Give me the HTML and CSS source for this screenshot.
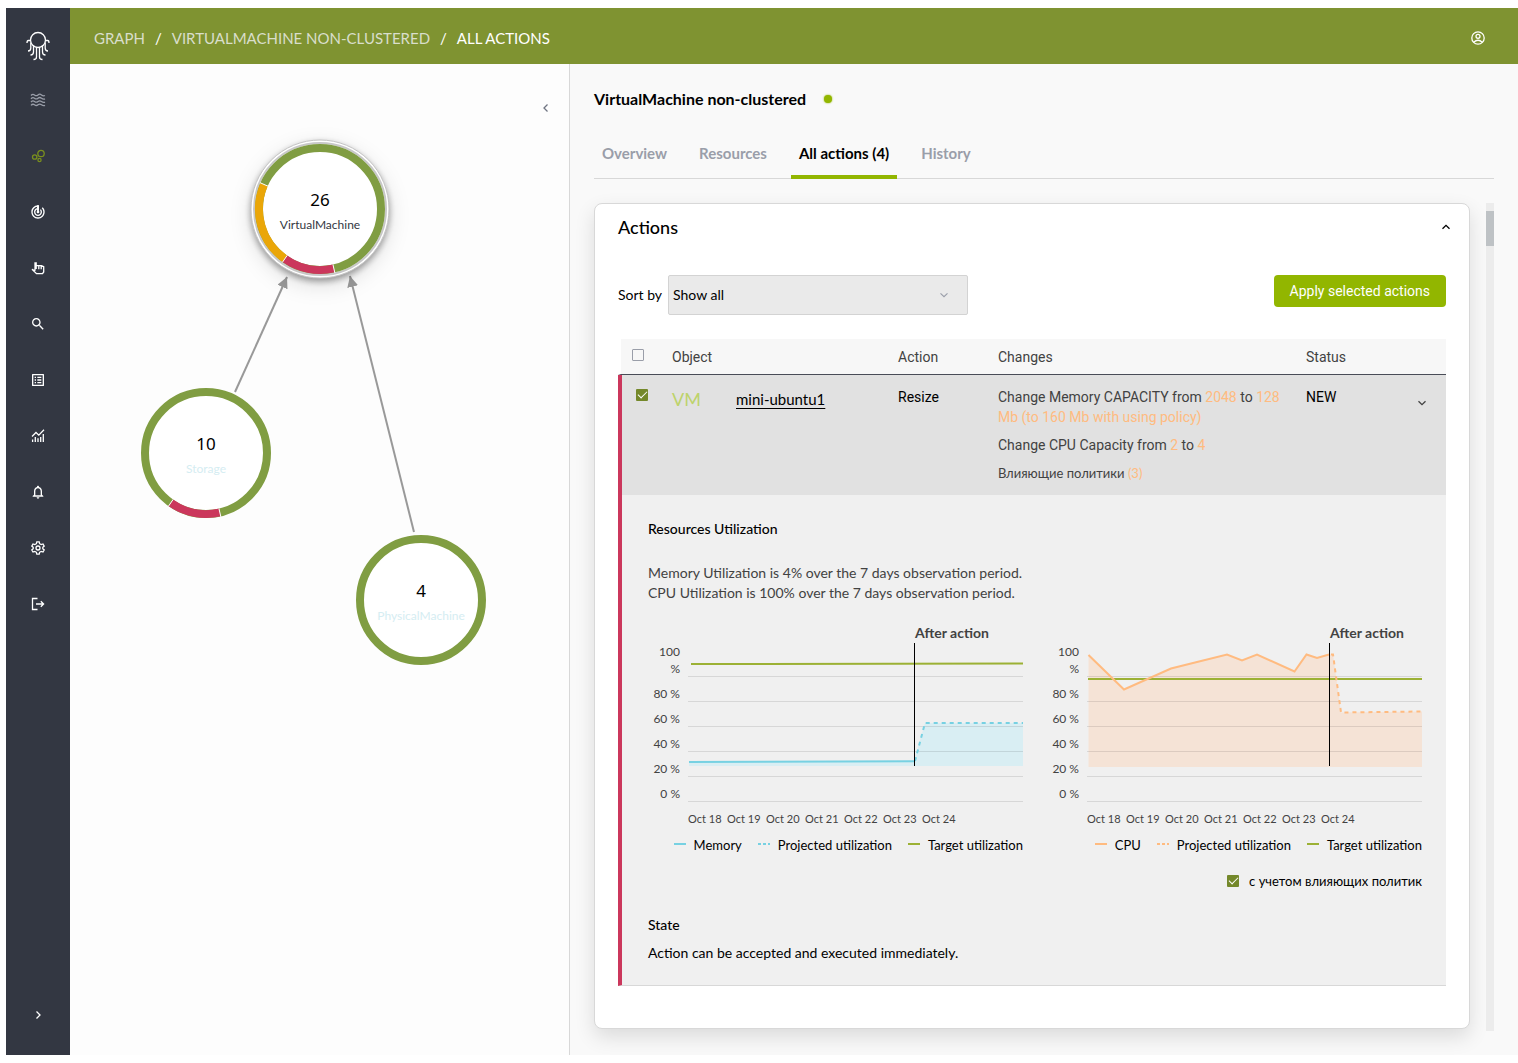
FILE: index.html
```html
<!DOCTYPE html>
<html lang="en">
<head>
    <meta charset="UTF-8">
    <meta name="viewport" content="width=device-width, initial-scale=1.0">
    <title>VirtualMachine non-clustered - All actions</title>
    <link rel="stylesheet" href="styles.css">
</head>
<body>

    <nav class="sidebar" aria-label="Main">
        <a href="#" class="logo" aria-label="Home">
            <svg width="24" height="30" viewBox="0 0 24 30">
                <circle cx="12" cy="9" r="7.5"/>
                <path d="M4.5 9.5H2.3Q1 9.5 1 12M19.500 9.500H21.700Q23 9.500 23 12M4.800 11.500V17Q4.800 20 2 20M19.200 11.500V17Q19.200 20 22 20M7.500 14.500V21Q7.500 24 4.500 24M16.500 14.500V21Q16.500 24 19.500 24M10.500 16V26Q10.500 28.500 7.500 28.500M13.500 16V26Q13.500 28.500 16.500 28.500"/>
            </svg>
        </a>
        <a href="#" class="nav-item muted" aria-label="Flows">
            <svg class="line" viewBox="0 0 16 16"><path d="M1 3.500q1.700-2 3.500-.6t3.500 0t3.500 0t3.500.6M1 6.800q1.700-2 3.500-.6t3.500 0t3.500 0t3.500.6M1 10.100q1.700-2 3.500-.6t3.500 0t3.500 0t3.500.6M1 13.400q1.700-2 3.500-.6t3.500 0t3.500 0t3.500.6"/></svg>
        </a>
        <a href="#" class="nav-item active" aria-label="Graph">
            <svg class="line" viewBox="0 0 16 16"><circle cx="11" cy="5.500" r="3.200"/><circle cx="4.700" cy="9" r="2.200"/><circle cx="9.500" cy="12" r="1.600"/></svg>
        </a>
        <a href="#" class="nav-item" aria-label="Targets">
            <svg viewBox="0 0 24 24"><path d="M19.070 4.930l-1.410 1.410C19.100 7.790 20 9.790 20 12c0 4.420-3.580 8-8 8s-8-3.580-8-8c0-4.080 3.050-7.440 7-7.930v2.020C8.160 6.570 6 9.030 6 12c0 3.310 2.690 6 6 6s6-2.690 6-6c0-1.660-.67-3.160-1.760-4.240l-1.410 1.410C15.550 9.900 16 10.900 16 12c0 2.210-1.790 4-4 4s-4-1.790-4-4c0-1.860 1.280-3.410 3-3.860v2.140c-.6.350-1 .98-1 1.720 0 1.100.9 2 2 2s2-.9 2-2c0-.74-.4-1.380-1-1.720V2h-1C6.480 2 2 6.480 2 12s4.480 10 10 10 10-4.480 10-10c0-2.760-1.120-5.260-2.930-7.070z"/><path d="M10.500 2h3v8h-3z"/></svg>
        </a>
        <a href="#" class="nav-item" aria-label="Actions">
            <svg class="line" viewBox="0 0 16 16"><path d="M5 10.800V2.200M6.200 2.200V9M8.800 5.500V9.300M11.200 6V9.300M6.500 5.700H11.500L13.700 6.600V12L12.500 13.600H6.500L2 9.300L5 10.800"/></svg>
        </a>
        <a href="#" class="nav-item" aria-label="Search">
            <svg viewBox="0 0 24 24"><path d="M15.500 14h-.79l-.28-.27C15.410 12.590 16 11.110 16 9.500 16 5.910 13.090 3 9.500 3S3 5.910 3 9.500 5.910 16 9.500 16c1.610 0 3.090-.59 4.230-1.570l.27.28v.79l5 4.990L20.490 19l-4.990-5zm-6 0C7.010 14 5 11.990 5 9.500S7.010 5 9.500 5 14 7.010 14 9.500 11.990 14 9.500 14z"/></svg>
        </a>
        <a href="#" class="nav-item" aria-label="Policies">
            <svg viewBox="0 0 24 24"><path d="M19 5v14H5V5h14m1.100-2H3.900c-.5 0-.9.4-.9.9v16.200c0 .4.4.9.9.9h16.200c.4 0 .9-.5.9-.9V3.900c0-.5-.5-.9-.9-.9zM11 7h6v2h-6V7zm0 4h6v2h-6v-2zm0 4h6v2h-6zM7 7h2v2H7zm0 4h2v2H7zm0 4h2v2H7z"/></svg>
        </a>
        <a href="#" class="nav-item" aria-label="Reports">
            <svg class="line" viewBox="0 0 16 16"><path d="M2 8.500L6 4.500L8.800 7.200L14 1.800M2.600 14V11.500M5.300 14V9M8 14V10.200M10.700 14V9M13.300 14V6"/></svg>
        </a>
        <a href="#" class="nav-item" aria-label="Notifications">
            <svg viewBox="0 0 24 24"><path d="M12 22c1.100 0 2-.9 2-2h-4c0 1.100.9 2 2 2zm6-6v-5c0-3.070-1.630-5.640-4.500-6.320V4c0-.83-.67-1.500-1.500-1.500s-1.500.67-1.500 1.500v.68C7.640 5.360 6 7.920 6 11v5l-2 2v1h16v-1l-2-2zm-2 1H8v-6c0-2.480 1.510-4.500 4-4.500s4 2.020 4 4.500v6z"/></svg>
        </a>
        <a href="#" class="nav-item" aria-label="Settings">
            <svg class="line" viewBox="0 0 16 16"><circle cx="8" cy="8" r="2"/><path d="M6.800 1.800H9.200L9.600 3.700L11.200 4.600L13 4L14.200 6.100L12.800 7.300V8.700L14.200 9.900L13 12L11.200 11.400L9.600 12.300L9.200 14.200H6.800L6.400 12.300L4.800 11.400L3 12L1.800 9.900L3.200 8.700V7.300L1.800 6.100L3 4L4.800 4.600L6.400 3.700Z"/></svg>
        </a>
        <a href="#" class="nav-item" aria-label="Log out">
            <svg class="line" viewBox="0 0 16 16"><path d="M7.500 2.500H2.500V13.500H7.500M6 8H13.500M10.800 5.200L13.600 8L10.800 10.800"/></svg>
        </a>
        <button class="nav-item expand" aria-label="Expand menu">
            <svg class="line" viewBox="0 0 16 16"><path d="M6.500 4.500L10 8L6.500 11.500"/></svg>
        </button>
    </nav>

    <div class="page">
        <header class="topbar">
            <nav class="breadcrumbs" aria-label="Breadcrumbs">
                <a href="#">GRAPH</a>
                <span>/</span>
                <a href="#">VIRTUALMACHINE NON-CLUSTERED</a>
                <span>/</span>
                <span>ALL ACTIONS</span>
            </nav>
            <button class="icon-button" aria-label="Account">
                <svg class="line" viewBox="0 0 16 16"><circle cx="8" cy="8" r="6.200"/><circle cx="8" cy="6.300" r="2"/><path d="M3.700 12.200Q8 8.300 12.300 12.200"/></svg>
            </button>
        </header>

        <main class="content">
            <section class="graph" aria-label="Graph">
                <button class="icon-button collapse" aria-label="Collapse">
                    <svg class="line" viewBox="0 0 16 16"><path d="M9.500 4.500L6 8L9.500 11.500"/></svg>
                </button>
                <svg class="graph-canvas" viewBox="0 0 499 620">
                    <defs>
                        <marker id="arrow" viewBox="0 0 10 10" refX="10" refY="5" markerWidth="11" markerHeight="11" markerUnits="userSpaceOnUse" orient="auto">
                            <path d="M0 0L10 5L0 10Z" fill="#999"/>
                        </marker>
                    </defs>
                    <path class="edge" d="M165 328L217 213"/>
                    <path class="edge" d="M344 468L280 212"/>

                    <g transform="translate(250 145)">
                        <circle class="halo" r="69"/>
                        <circle class="halo-inner" r="66"/>
                        <circle class="ring" r="61"/>
                        <path class="arc warning" d="M-55.900 -24.500A61 61 0 0 0 -35.200 49.800"/>
                        <path class="arc critical" d="M-35.200 49.800A61 61 0 0 0 13.900 59.400"/>
                        <path class="divider" d="M-52 -22.800L-60 -26.300M-32.800 46.400L-37.600 53.300M12.900 55.400L14.900 64"/>
                        <text class="count" y="-3">26</text>
                        <text class="name" y="20">VirtualMachine</text>
                    </g>
                    <g transform="translate(136 389)">
                        <circle class="ring" r="61"/>
                        <path class="arc critical" d="M-35.200 49.800A61 61 0 0 0 13.900 59.400"/>
                        <path class="divider" d="M-32.800 46.400L-37.600 53.300M12.900 55.400L14.900 64"/>
                        <text class="count" y="-3">10</text>
                        <text class="name faded" y="20">Storage</text>
                    </g>
                    <g transform="translate(351 536)">
                        <circle class="ring" r="61"/>
                        <text class="count" y="-3">4</text>
                        <text class="name faded" y="20">PhysicalMachine</text>
                    </g>
                </svg>
            </section>

            <section class="details">
                <h1>VirtualMachine non-clustered <span class="status-dot"></span></h1>
                <nav class="tabs" aria-label="Sections">
                    <a href="#">Overview</a>
                    <a href="#">Resources</a>
                    <a href="#" class="current">All actions (4)</a>
                    <a href="#">History</a>
                </nav>

                <div class="scroll-area">
                    <div class="card">
                        <div class="card-header">
                            <h2>Actions</h2>
                            <button class="icon-button" aria-label="Collapse actions">
                                <svg class="line" viewBox="0 0 16 16"><path d="M4.500 9.800L8 6.300L11.500 9.800"/></svg>
                            </button>
                        </div>

                        <div class="toolbar">
                            <label for="sort">Sort by</label>
                            <div class="select">
                                <select id="sort">
                                    <option>Show all</option>
                                </select>
                                <svg class="line" viewBox="0 0 16 16"><path d="M4 6.200L8 10L12 6.200"/></svg>
                            </div>
                            <button class="apply">Apply selected actions</button>
                        </div>

                        <table class="actions">
                            <colgroup>
                                <col class="col-check">
                                <col>
                                <col class="col-action">
                                <col class="col-changes">
                                <col class="col-status">
                            </colgroup>
                            <thead>
                                <tr>
                                    <th><input type="checkbox" aria-label="Select all"></th>
                                    <th>Object</th>
                                    <th>Action</th>
                                    <th>Changes</th>
                                    <th>Status</th>
                                </tr>
                            </thead>
                            <tbody>
                                <tr class="row">
                                    <td><input type="checkbox" aria-label="Select mini-ubuntu1" checked></td>
                                    <td>
                                        <div class="object">
                                            <span class="type">VM</span>
                                            <a href="#">mini-ubuntu1</a>
                                        </div>
                                    </td>
                                    <td>Resize</td>
                                    <td class="changes">
                                        <p>Change Memory CAPACITY from <em>2048</em> to <em>128</em> <em>Mb (to 160 Mb with using policy)</em></p>
                                        <p>Change CPU Capacity from <em>2</em> to <em>4</em></p>
                                        <p class="policies">Влияющие политики <em>(3)</em></p>
                                    </td>
                                    <td>
                                        <div class="status">
                                            <span>NEW</span>
                                            <button class="icon-button" aria-label="Toggle details">
                                                <svg class="line" viewBox="0 0 16 16"><path d="M4.500 6.200L8 9.700L11.500 6.200"/></svg>
                                            </button>
                                        </div>
                                    </td>
                                </tr>
                                <tr class="expanded">
                                    <td colspan="5">
                                        <h3>Resources Utilization</h3>
                                        <p class="summary">Memory Utilization is 4% over the 7 days observation period.<br>CPU Utilization is 100% over the 7 days observation period.</p>

                                        <div class="charts">
                                            <div class="chart memory">
                                                <ul class="y-axis">
                                                    <li>100 %</li>
                                                    <li>80 %</li>
                                                    <li>60 %</li>
                                                    <li>40 %</li>
                                                    <li>20 %</li>
                                                    <li>0 %</li>
                                                </ul>
                                                <svg class="plot" viewBox="0 0 335 179">
                                                    <path class="area" d="M1 139L226 138L237 100H335V143H1Z"/>
                                                    <path class="grid" d="M0 53.500H335M0 78.500H335M0 103.500H335M0 128.500H335M0 153.500H335M0 178.500H335"/>
                                                    <path class="target" d="M3 41L335 40.600"/>
                                                    <path class="series" d="M1 139L226 138.300"/>
                                                    <path class="series projected" d="M227 138L237 100H335"/>
                                                    <path class="moment" d="M226.500 20V143"/>
                                                    <text x="227" y="15">After action</text>
                                                </svg>
                                                <ul class="x-axis">
                                                    <li>Oct 18</li>
                                                    <li>Oct 19</li>
                                                    <li>Oct 20</li>
                                                    <li>Oct 21</li>
                                                    <li>Oct 22</li>
                                                    <li>Oct 23</li>
                                                    <li>Oct 24</li>
                                                </ul>
                                                <ul class="legend">
                                                    <li>Memory</li>
                                                    <li class="dashed">Projected utilization</li>
                                                    <li class="goal">Target utilization</li>
                                                </ul>
                                            </div>

                                            <div class="chart cpu">
                                                <ul class="y-axis">
                                                    <li>100 %</li>
                                                    <li>80 %</li>
                                                    <li>60 %</li>
                                                    <li>40 %</li>
                                                    <li>20 %</li>
                                                    <li>0 %</li>
                                                </ul>
                                                <svg class="plot" viewBox="0 0 335 179">
                                                    <path class="area" d="M1.500 32L37 66.500L84 45.500L140 31.500L155 37.500L170 31.500L207.500 48.500L219.500 31.500L230 35L242 31.500H246L254 89.500L335 88.500V144H1.500Z"/>
                                                    <path class="grid" d="M0 53.500H335M0 78.500H335M0 103.500H335M0 128.500H335M0 153.500H335M0 178.500H335"/>
                                                    <path class="target" d="M1 56H335"/>
                                                    <path class="series" d="M1.500 32L37 66.500L84 45.500L140 31.500L155 37.500L170 31.500L207.500 48.500L219.500 31.500L230 35L242 31.500"/>
                                                    <path class="series projected" d="M244 31.500H246L254 89.500L335 88.500"/>
                                                    <path class="moment" d="M242.500 20V143"/>
                                                    <text x="243" y="15">After action</text>
                                                </svg>
                                                <ul class="x-axis">
                                                    <li>Oct 18</li>
                                                    <li>Oct 19</li>
                                                    <li>Oct 20</li>
                                                    <li>Oct 21</li>
                                                    <li>Oct 22</li>
                                                    <li>Oct 23</li>
                                                    <li>Oct 24</li>
                                                </ul>
                                                <ul class="legend">
                                                    <li>CPU</li>
                                                    <li class="dashed">Projected utilization</li>
                                                    <li class="goal">Target utilization</li>
                                                </ul>
                                            </div>
                                        </div>

                                        <label class="with-policies"><input type="checkbox" checked> с учетом влияющих политик</label>

                                        <h3>State</h3>
                                        <p class="state">Action can be accepted and executed immediately.</p>
                                    </td>
                                </tr>
                            </tbody>
                        </table>
                    </div>
                    <div class="scrollbar"><div class="thumb"></div></div>
                </div>
            </section>
        </main>
    </div>

</body>
</html>
```
FILE: styles.css
```css
* {
    box-sizing: border-box;
}

body {
    display: flex;
    min-height: calc(100vh - 16px);
    margin: 8px 0 8px 6px;
    background-color: #fff;
    color: #000;
    font-family: Lato, sans-serif;
    font-size: 14px;
    line-height: 20px;
}

h1, h2, h3, p, ul {
    margin: 0;
    padding: 0;
}

ul {
    list-style: none;
}

button {
    padding: 0;
    border: none;
    background: none;
    color: inherit;
    cursor: pointer;
}

/* Icons */
svg {
    display: block;
    fill: currentColor;
}

.line {
    fill: none;
    stroke: currentColor;
    stroke-width: 1.3;
}

.icon-button {
    width: 16px;
    height: 16px;
}

/* Sidebar */
.sidebar {
    position: relative;
    display: flex;
    flex-direction: column;
    flex: 0 0 64px;
    background-color: #333742;
    color: #fff;
    box-shadow: 0 0 8px rgba(0, 0, 0, 0.2);
}

.logo {
    display: flex;
    align-items: flex-end;
    justify-content: center;
    height: 64px;
    padding-bottom: 11px;
    color: #fff;
}

.logo svg {
    fill: none;
    stroke: currentColor;
    stroke-width: 1.3;
}

.nav-item {
    display: flex;
    align-items: center;
    justify-content: center;
    height: 56px;
    color: #fff;
}

.nav-item svg {
    width: 16px;
    height: 16px;
}

.muted {
    color: #9a9ea9;
}

.active {
    color: #7a8f1e;
}

.expand {
    margin-top: auto;
    margin-bottom: 12px;
}

/* Top bar */
.page {
    display: flex;
    flex-direction: column;
    flex: 1;
    min-width: 0;
    z-index: 1;
}

.topbar {
    display: flex;
    align-items: center;
    justify-content: space-between;
    height: 56px;
    padding: 4px 32px 0 24px;
    background-color: #7f9331;
    color: #fff;
}

.breadcrumbs {
    display: flex;
    gap: 10px;
    font-size: 15px;
}

.breadcrumbs a {
    color: #d9decb;
    text-decoration: none;
}

.content {
    display: flex;
    flex: 1;
}

/* Graph */
.graph {
    position: relative;
    flex: 0 0 500px;
    border-right: 1px solid #d8d8d8;
    background-color: #fdfdfd;
}

.collapse {
    position: absolute;
    top: 36px;
    right: 15px;
    color: #6f7482;
}

.graph-canvas {
    width: 100%;
}

.edge {
    stroke: #999;
    stroke-width: 2;
    marker-end: url(#arrow);
}

.halo {
    fill: #fff;
    stroke: #c4c4c4;
    stroke-width: 1;
    filter: drop-shadow(0 3px 3px rgba(0, 0, 0, 0.35)) drop-shadow(0 6px 10px rgba(0, 0, 0, 0.12));
}

.halo-inner {
    fill: #fff;
    stroke: #c8c8c8;
    stroke-width: 2;
}

.ring {
    fill: #fff;
    stroke: #809d42;
    stroke-width: 8;
}

.arc {
    fill: none;
    stroke-width: 8;
}

.warning {
    stroke: #eaa608;
}

.critical {
    stroke: #cb375c;
}

.divider {
    stroke: #fff;
    stroke-width: 1;
}

.graph text {
    text-anchor: middle;
}

.count {
    font-family: "Noto Sans", sans-serif;
    font-size: 17px;
}

.name {
    fill: #333742;
    font-size: 12px;
}

.faded {
    fill: #d5edf2;
}

/* Details */
.details {
    display: flex;
    flex-direction: column;
    flex: 1;
    min-width: 0;
    padding: 24px;
    background-color: #f9f9f9;
}

h1 {
    display: flex;
    align-items: center;
    gap: 18px;
    height: 22px;
    font-size: 16px;
}

.status-dot {
    width: 8px;
    height: 8px;
    border-radius: 50%;
    background-color: #92b600;
    box-shadow: 0 0 2px #92b600;
}

.tabs {
    display: flex;
    gap: 16px;
    margin-top: 18px;
    border-bottom: 1px solid #d8d8d8;
    font-size: 15px;
}

.tabs a {
    height: 51px;
    margin-bottom: -1px;
    padding: 15px 8px 0;
    color: #9a9ea9;
    font-weight: bold;
    text-decoration: none;
}

.tabs .current {
    border-bottom: 4px solid #92b600;
    color: #000;
}

.scroll-area {
    display: flex;
    flex: 1;
    align-items: flex-start;
    gap: 16px;
    margin-top: 24px;
}

.card {
    flex: 1;
    min-width: 0;
    padding: 12px 23px 42px;
    border: 1px solid #d8d8d8;
    border-radius: 8px;
    background-color: #fff;
    box-shadow: 0 8px 20px rgba(0, 0, 0, 0.12);
}

.scrollbar {
    align-self: stretch;
    width: 8px;
    padding-top: 8px;
    background-color: #ececec;
}

.thumb {
    height: 35px;
    background-color: #bec2c5;
}

.card-header {
    display: flex;
    align-items: center;
    justify-content: space-between;
    height: 22px;
    margin-right: -8px;
}

h2 {
    font-size: 18px;
    font-weight: 500;
}

.toolbar {
    display: flex;
    align-items: flex-start;
    gap: 6px;
    margin-top: 37px;
}

.toolbar label {
    line-height: 40px;
}

.select {
    position: relative;
    width: 300px;
}

.select select {
    width: 100%;
    height: 40px;
    padding: 0 4px;
    border: 1px solid #d3d3d3;
    border-radius: 2px;
    background-color: #eaeaea;
    color: #000;
    font: inherit;
    appearance: none;
}

.select svg {
    position: absolute;
    top: 13px;
    right: 17px;
    width: 14px;
    height: 14px;
    color: #9a9ea9;
    pointer-events: none;
}

.apply {
    height: 32px;
    margin-left: auto;
    padding: 0 16px;
    border-radius: 4px;
    background-color: #92b600;
    color: #fff;
    font-family: Roboto, sans-serif;
    font-size: 14px;
}

/* Actions table */
.actions {
    width: 100%;
    margin-top: 24px;
    table-layout: fixed;
    border-spacing: 0;
    font-family: Roboto, sans-serif;
}

.col-check {
    width: 54px;
}

.col-action {
    width: 100px;
}

.col-changes {
    width: 308px;
}

.col-status {
    width: 140px;
}

th {
    height: 36px;
    padding: 0;
    border-bottom: 1px solid #494c57;
    background-color: #f7f7f7;
    color: #424242;
    font-weight: normal;
    text-align: left;
}

th:first-child {
    padding: 0 0 4px 11px;
    border-left: 3px solid #fff;
}

td {
    padding: 0;
    vertical-align: top;
}

td:first-child {
    border-left: 4px solid #cb375c;
}

input[type="checkbox"] {
    display: block;
    width: 12px;
    height: 12px;
    margin: 0;
    border: 1px solid #9a9ea9;
    border-radius: 1px;
    appearance: none;
}

input[type="checkbox"]:checked {
    border: none;
    background-color: #74882a;
}

/* Tick mark */
input[type="checkbox"]:checked::after {
    content: "";
    display: block;
    width: 4px;
    height: 8px;
    margin-left: 4px;
    border: solid #fff;
    border-width: 0 1px 1px 0;
    transform: rotate(45deg);
}

.row td {
    height: 120px;
    padding-top: 12px;
    background-color: #e1e1e1;
}

.row td:first-child {
    padding: 14px 0 0 14px;
}

.object {
    display: flex;
    font-family: Lato, sans-serif;
    line-height: 24px;
}

.object .type {
    width: 64px;
    color: #bdd36b;
    font-size: 18px;
}

.object a {
    color: #000;
    font-size: 15px;
    text-underline-offset: 3px;
}

.changes {
    color: #424242;
}

.row .changes {
    padding-right: 16px;
}

.changes p {
    margin-bottom: 8px;
}

.changes em {
    color: #ffbb80;
    font-style: normal;
}

.policies {
    font-family: Lato, sans-serif;
    font-size: 13px;
}

.status {
    display: flex;
    justify-content: space-between;
    padding-right: 16px;
}

.status .icon-button {
    margin-top: 8px;
    color: #424242;
}

/* Expanded row */
.expanded td {
    padding: 24px 24px 22px 26px;
    border-bottom: 1px solid #d8d8d8;
    background-color: #f0f0f0;
    font-family: Lato, sans-serif;
}

h3 {
    font-size: 14px;
    font-weight: 500;
}

.summary {
    margin-top: 24px;
    color: #424242;
}

.charts {
    display: grid;
    grid-template-columns: 1fr 1fr;
    gap: 24px;
    margin-top: 20px;
}

.chart {
    display: grid;
    grid-template-columns: 32px 1fr;
    column-gap: 8px;
}

.memory {
    --series: #77d1e2;
    --area: #d9eef3;
}

.cpu {
    --series: #ffbb80;
    --area: #f5e3d6;
}

.y-axis {
    padding-top: 20px;
    color: #424242;
    font-size: 12px;
    line-height: 17px;
    text-align: right;
}

.y-axis li + li {
    padding-top: 8px;
}

.y-axis li:first-child {
    padding-left: 8px;
}

.plot {
    width: 100%;
}

.plot path {
    fill: none;
    stroke-width: 2;
}

.plot .area {
    fill: var(--area);
}

.plot .series {
    stroke: var(--series);
}

.plot .projected {
    stroke-dasharray: 4 4;
}

.plot .target {
    stroke: #9cb135;
}

.plot .grid {
    stroke: #000;
    stroke-opacity: 0.1;
    stroke-width: 1;
}

.plot .moment {
    stroke: #000;
    stroke-width: 1;
}

.plot text {
    fill: #424242;
    font-size: 14px;
    font-weight: bold;
}

.x-axis {
    display: flex;
    grid-column: 2;
    margin-top: 7px;
    color: #424242;
    font-size: 11px;
}

.x-axis li {
    width: 39px;
    white-space: nowrap;
}

.legend {
    display: flex;
    grid-column: 1 / 3;
    justify-content: flex-end;
    gap: 16px;
    margin-top: 6px;
    font-size: 13px;
    white-space: nowrap;
}

.legend li {
    display: flex;
    gap: 8px;
}

.legend li::before {
    content: "";
    width: 12px;
    height: 2px;
    margin-top: 8px;
    background-color: var(--series);
}

.legend .dashed::before {
    background: repeating-linear-gradient(to right, var(--series) 0 3px, transparent 3px 5px);
}

.legend .goal::before {
    background-color: #9cb135;
}

.with-policies {
    display: flex;
    align-items: center;
    justify-content: flex-end;
    gap: 10px;
    margin: 16px 0 24px;
    font-size: 13px;
}

.state {
    margin-top: 8px;
}
```
